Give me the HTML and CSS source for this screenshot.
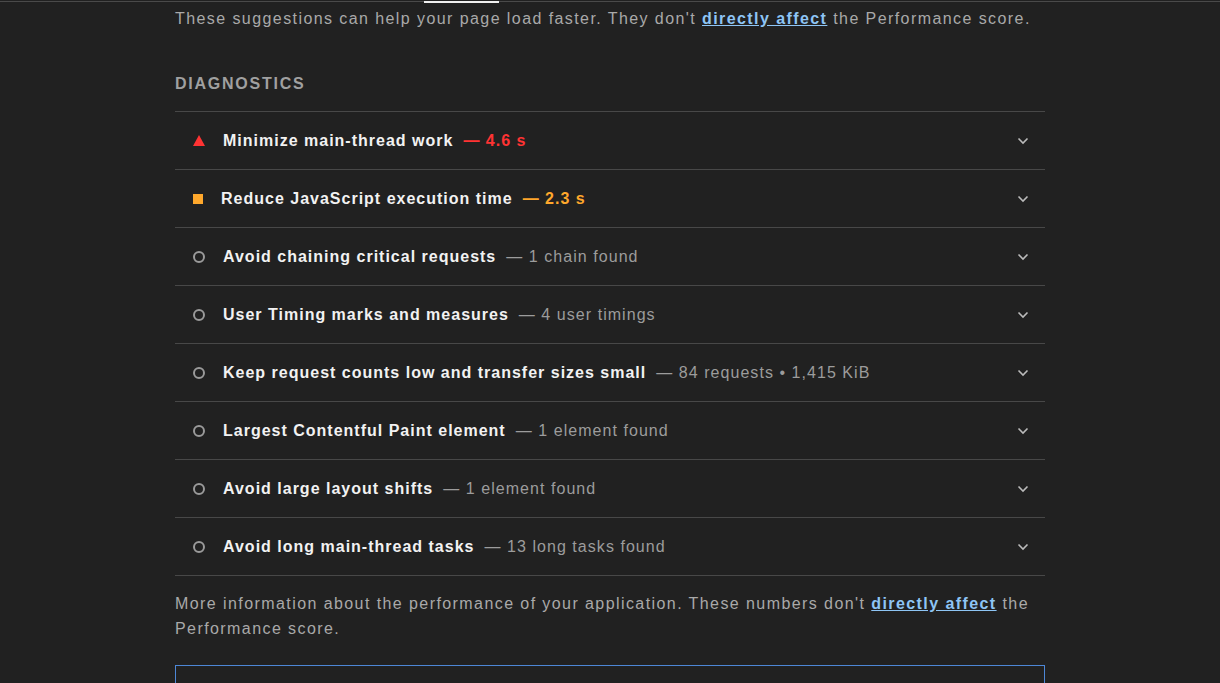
FILE: index.html
```html
<!DOCTYPE html>
<html>
<head>
<meta charset="utf-8">
<link rel="stylesheet" href="styles.css">
</head>
<body>
<div class="topbar"><span class="tab-indicator"></span></div>
<main class="content">
  <p class="desc">These suggestions can help your page load faster. They don't <a href="#">directly affect</a> the Performance score.</p>
  <h2 class="group-title">Diagnostics</h2>
  <div class="audits">
    <div class="audit">
      <span class="icon"><svg width="12" height="11" viewBox="0 0 12 11"><polygon points="6,0 12,11 0,11" fill="#f33"/></svg></span>
      <span class="title">Minimize main-thread work</span>
      <span class="value fail">— 4.6 s</span>
      <span class="chev"><svg width="12" height="8" viewBox="0 0 12 8"><path d="M1.5 1.5 L6 6 L10.5 1.5" fill="none" stroke="#bbb" stroke-width="1.6"/></svg></span>
    </div>
    <div class="audit">
      <span class="icon sq"><span class="square"></span></span>
      <span class="title">Reduce JavaScript execution time</span>
      <span class="value avg">— 2.3 s</span>
      <span class="chev"><svg width="12" height="8" viewBox="0 0 12 8"><path d="M1.5 1.5 L6 6 L10.5 1.5" fill="none" stroke="#bbb" stroke-width="1.6"/></svg></span>
    </div>
    <div class="audit">
      <span class="icon"><span class="circle"></span></span>
      <span class="title">Avoid chaining critical requests</span>
      <span class="value">— 1 chain found</span>
      <span class="chev"><svg width="12" height="8" viewBox="0 0 12 8"><path d="M1.5 1.5 L6 6 L10.5 1.5" fill="none" stroke="#bbb" stroke-width="1.6"/></svg></span>
    </div>
    <div class="audit">
      <span class="icon"><span class="circle"></span></span>
      <span class="title">User Timing marks and measures</span>
      <span class="value">— 4 user timings</span>
      <span class="chev"><svg width="12" height="8" viewBox="0 0 12 8"><path d="M1.5 1.5 L6 6 L10.5 1.5" fill="none" stroke="#bbb" stroke-width="1.6"/></svg></span>
    </div>
    <div class="audit">
      <span class="icon"><span class="circle"></span></span>
      <span class="title">Keep request counts low and transfer sizes small</span>
      <span class="value">— 84 requests • 1,415 KiB</span>
      <span class="chev"><svg width="12" height="8" viewBox="0 0 12 8"><path d="M1.5 1.5 L6 6 L10.5 1.5" fill="none" stroke="#bbb" stroke-width="1.6"/></svg></span>
    </div>
    <div class="audit">
      <span class="icon"><span class="circle"></span></span>
      <span class="title">Largest Contentful Paint element</span>
      <span class="value">— 1 element found</span>
      <span class="chev"><svg width="12" height="8" viewBox="0 0 12 8"><path d="M1.5 1.5 L6 6 L10.5 1.5" fill="none" stroke="#bbb" stroke-width="1.6"/></svg></span>
    </div>
    <div class="audit">
      <span class="icon"><span class="circle"></span></span>
      <span class="title">Avoid large layout shifts</span>
      <span class="value">— 1 element found</span>
      <span class="chev"><svg width="12" height="8" viewBox="0 0 12 8"><path d="M1.5 1.5 L6 6 L10.5 1.5" fill="none" stroke="#bbb" stroke-width="1.6"/></svg></span>
    </div>
    <div class="audit">
      <span class="icon"><span class="circle"></span></span>
      <span class="title">Avoid long main-thread tasks</span>
      <span class="value">— 13 long tasks found</span>
      <span class="chev"><svg width="12" height="8" viewBox="0 0 12 8"><path d="M1.5 1.5 L6 6 L10.5 1.5" fill="none" stroke="#bbb" stroke-width="1.6"/></svg></span>
    </div>
  </div>
  <p class="desc more">More information about the performance of your application. These numbers don't <a href="#">directly affect</a> the Performance score.</p>
  <div class="next-box"></div>
</main>
</body>
</html>
```

FILE: styles.css
```css
html, body {
  margin: 0;
  padding: 0;
  background: #212121;
  overflow: hidden;
}
body {
  font-family: "Liberation Sans", Arial, sans-serif;
  color: #ababab;
  height: 683px;
}
.topbar {
  position: relative;
  margin-top: 1px;
  height: 1px;
  background: #4a4a4a;
}
.tab-indicator {
  position: absolute;
  left: 424px;
  top: 0;
  width: 75px;
  height: 2px;
  background: #f0f0f0;
}
.content {
  width: 870px;
  margin: 0 auto;
  padding-top: 4px;
}
.desc {
  margin: 0;
  font-size: 16px;
  line-height: 25px;
  letter-spacing: 1.42px;
  color: #a9a9a9;
}
.desc a {
  color: #8ec5f5;
  font-weight: bold;
  text-decoration: underline;
}
.group-title {
  margin: 39px 0 0;
  font-size: 16px;
  line-height: 28px;
  font-weight: bold;
  text-transform: uppercase;
  color: #a0a0a0;
  letter-spacing: 1.75px;
  padding-bottom: 13px;
}
.audits {
  border-bottom: 1px solid #484848;
}
.audit {
  display: flex;
  align-items: center;
  height: 57px;
  border-top: 1px solid #484848;
}
.icon {
  width: 48px;
  display: flex;
  justify-content: center;
  align-items: center;
}
.icon.sq {
  width: 46px;
}
.square {
  width: 10px;
  height: 10px;
  background: #ffa82c;
}
.circle {
  width: 8px;
  height: 8px;
  border: 2px solid #9a9a9a;
  border-radius: 50%;
}
.title {
  font-size: 16px;
  font-weight: bold;
  letter-spacing: 1px;
  color: #f2f2f2;
}
.value {
  margin-left: 10px;
  font-size: 16px;
  letter-spacing: 1.05px;
  color: #9c9c9c;
}
.value.fail {
  color: #f33;
  font-weight: bold;
  letter-spacing: 1px;
}
.value.avg {
  color: #ffa82c;
  font-weight: bold;
  letter-spacing: 1px;
}
.chev {
  margin-left: auto;
  margin-right: 16px;
  display: flex;
}
.more {
  margin-top: 15px;
}
.next-box {
  margin-top: 24px;
  height: 30px;
  border: 1px solid #4d87d6;
  border-bottom: 0;
}
```
